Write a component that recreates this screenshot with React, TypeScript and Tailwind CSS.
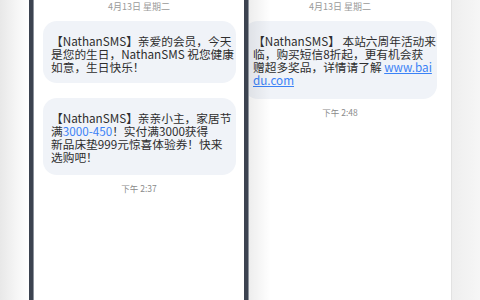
import React from "react";

const font = { fontFamily: '"Noto Sans CJK SC", "Noto Sans", sans-serif' };

function DateLabel() {
  return (
    <div className="text-center text-[9px] leading-[12px] text-[#9a9a9a] pt-[1px]">4月13日 星期二</div>
  );
}

function TimeLabel({ t }: { t: string }) {
  return <div className="text-center text-[8.5px] leading-[12px] text-[#8a8a8a] mt-[7px]">{t}</div>;
}

export default function App() {
  return (
    <div className="w-[480px] h-[300px] flex bg-white overflow-hidden relative" style={font}>
      <div className="w-[29px] shrink-0 bg-gradient-to-r from-[#e8e8e8] via-[#f4f4f4] to-white" />
      <div className="w-[5px] shrink-0 bg-[#3c4350] border-r border-[#8d939c]" />
      {/* Screen A */}
      <div className="w-[210px] shrink-0 flex flex-col">
        <DateLabel />
        <div className="ml-[9px] w-[193px] mt-[8px] rounded-[14px] bg-[#f0f3f8] pl-[8px] pt-[13px] pb-[10px] text-[11.7px] leading-[13px] text-[#2e2e2e] whitespace-nowrap">
          【NathanSMS】亲爱的会员，今天<br />
          是您的生日，NathanSMS 祝您健康<br />
          如意，生日快乐！
        </div>
        <div className="ml-[9px] w-[193px] mt-[15px] rounded-[14px] bg-[#f0f3f8] pl-[8px] pt-[13px] pb-[12px] text-[11.7px] leading-[13px] text-[#2e2e2e] whitespace-nowrap">
          【NathanSMS】亲亲小主，家居节<br />
          满<span className="text-[#3b82f6]">3000-450</span>！实付满3000获得<br />
          新品床垫999元惊喜体验券！快来<br />
          选购吧！
        </div>
        <TimeLabel t="下午 2:37" />
      </div>
      {/* Screen B */}
      <div className="w-[210px] shrink-0 -ml-[9px] flex flex-col relative">
        <DateLabel />
        <div className="ml-[9px] w-[193px] mt-[8px] rounded-[14px] bg-[#f0f3f8] pl-[9px] pt-[13px] pb-[13px] text-[11.7px] leading-[13px] text-[#2e2e2e] whitespace-nowrap">
          【NathanSMS】 本站六周年活动来<br />
          临，购买短信8折起，更有机会获<br />
          赠超多奖品，详情请了解 <span className="text-[#3b82f6] underline">www.bai</span><br />
          <span className="text-[#3b82f6] underline">du.com</span>
        </div>
        <TimeLabel t="下午 2:48" />
        <div className="absolute left-[9px] top-0 bottom-0 w-[5px] bg-[#3c4350] border-r border-[#8d939c]" />
        <div className="absolute left-[14px] top-0 bottom-0 w-[22px] bg-gradient-to-r from-black/[0.07] to-transparent" />
      </div>
      <div className="w-[6px] shrink-0" />
      <div className="flex-1 border-l border-[#e2e2e2] bg-gradient-to-r from-[#eeeeee] to-[#f6f6f6]" />
    </div>
  );
}
